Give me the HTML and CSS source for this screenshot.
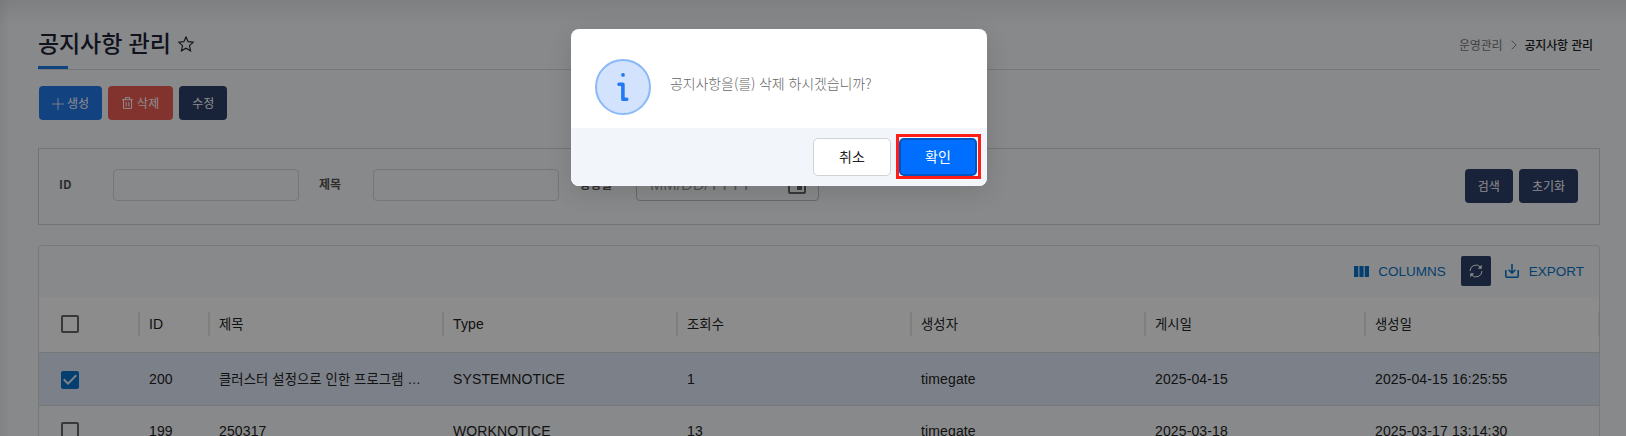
FILE: index.html
```html
<!DOCTYPE html>
<html lang="ko">
<head>
<meta charset="utf-8">
<title>공지사항 관리</title>
<link rel="stylesheet" href="styles.css">
</head>
<body>
<svg class="defs" width="0" height="0">
  <symbol id="box" viewBox="0 0 24 24"><path d="M19 5v14H5V5h14m0-2H5c-1.1 0-2 .9-2 2v14c0 1.1.9 2 2 2h14c1.1 0 2-.9 2-2V5c0-1.1-.9-2-2-2z"/></symbol>
  <symbol id="box-checked" viewBox="0 0 24 24"><path d="M19 3H5c-1.11 0-2 .9-2 2v14c0 1.1.89 2 2 2h14c1.11 0 2-.9 2-2V5c0-1.1-.89-2-2-2zm-9 14l-5-5 1.41-1.41L10 14.17l7.59-7.59L19 8l-9 9z"/></symbol>
</svg>
<main class="page">
  <header class="title-bar">
    <h1 class="title">공지사항 관리</h1>
    <svg class="star" viewBox="0 0 16 16"><path d="M8 .9l2.15 4.75 5.15.55-3.85 3.5 1.1 5.1L8 12.2l-4.55 2.6 1.1-5.1L.7 6.2l5.15-.55z"/></svg>
    <nav class="crumbs">
      <span>운영관리</span>
      <svg class="chevron" viewBox="0 0 6 10"><path d="M.7.7L5.2 5 .7 9.3"/></svg>
      <strong>공지사항 관리</strong>
    </nav>
  </header>

  <div class="actions">
    <button class="btn blue"><svg class="plus" viewBox="0 0 12 12"><path d="M6 0v12M0 6h12"/></svg>생성</button>
    <button class="btn red"><svg class="trash" viewBox="0 0 11 12"><path d="M0 2.7h11M3.3 2.5V.6h4.4v1.9M1.5 2.9v8.5h8V2.9M4.2 5v4.4M6.8 5v4.4"/></svg>삭제</button>
    <button class="btn navy">수정</button>
  </div>

  <section class="search">
    <label class="label-id">ID</label><div class="field"></div>
    <label class="label-title">제목</label><div class="field"></div>
    <label class="label-date">생성일</label>
    <div class="field date"><span>MM/DD/YYYY</span>
      <svg viewBox="0 0 24 24"><path d="M17 12h-5v5h5v-5zM16 1v2H8V1H6v2H5c-1.11 0-1.99.9-1.99 2L3 19c0 1.1.89 2 2 2h14c1.1 0 2-.9 2-2V5c0-1.1-.9-2-2-2h-1V1h-2zm3 18H5V8h14v11z"/></svg>
    </div>
    <div class="search-buttons"><button class="btn navy">검색</button><button class="btn navy">초기화</button></div>
  </section>

  <section class="grid">
    <div class="toolbar">
      <span class="tool"><svg class="cols" viewBox="0 0 15 11"><path d="M0 0h4.3v11H0zM5.4 0h4.2v11H5.4zM10.7 0H15v11h-4.3z"/></svg>COLUMNS</span>
      <span class="refresh"><svg viewBox="0 0 14 14"><path class="arc" d="M1 7A6 6 0 0 1 11.6 3.2M13 7A6 6 0 0 1 2.4 10.8"/><path class="tip" d="M12.7.8v4H8.8zM1.3 13.2v-4h3.9z"/></svg></span>
      <span class="tool export"><svg class="down" viewBox="0 0 14 14"><path d="M.8 6v6.2q0 1 1 1h10.4q1 0 1-1V6M7 0v9M3.6 5.8L7 9.2l3.4-3.4"/></svg>EXPORT</span>
    </div>
    <div class="row head">
      <div class="check"><svg><use href="#box"/></svg></div>
      <div>ID</div><div class="ko">제목</div><div>Type</div><div class="ko">조회수</div><div class="ko">생성자</div><div class="ko">게시일</div><div class="ko">생성일</div>
    </div>
    <div class="row selected">
      <div class="check"><svg><use href="#box-checked"/></svg></div>
      <div>200</div><div class="ko">클러스터 설정으로 인한 프로그램 …</div><div>SYSTEMNOTICE</div><div>1</div><div>timegate</div><div>2025-04-15</div><div>2025-04-15 16:25:55</div>
    </div>
    <div class="row">
      <div class="check"><svg><use href="#box"/></svg></div>
      <div>199</div><div>250317</div><div>WORKNOTICE</div><div>13</div><div>timegate</div><div>2025-03-18</div><div>2025-03-17 13:14:30</div>
    </div>
  </section>
</main>

<div class="overlay">
  <div class="dialog">
    <div class="dialog-body">
      <div class="info"><svg viewBox="0 0 12 28"><circle cx="6" cy="1.9" r="1.9"/><path d="M2 11.2h3.9v15.1h3.8"/></svg></div>
      <p>공지사항을(를) 삭제 하시겠습니까?</p>
    </div>
    <div class="dialog-foot">
      <button class="choice">취소</button>
      <button class="choice confirm">확인</button>
    </div>
  </div>
</div>
</body>
</html>
```
FILE: styles.css
```css
* { box-sizing: border-box; }
body {
  margin: 0;
  height: 436px;
  overflow: hidden;
  background: #f7f9fc;
  font-family: "Noto Sans CJK KR", sans-serif;
  font-size: 12px;
  color: #222;
}
.defs { position: absolute; }
button { font-family: inherit; }
svg { display: block; flex: none; }

.page {
  height: 436px;
  overflow: hidden;
  padding: 0 26px 0 38px;
  background:
    linear-gradient(to right, rgba(0,0,0,.05), transparent 10px),
    linear-gradient(to bottom, rgba(0,0,0,.07), transparent 24px);
}

.title-bar {
  height: 70px;
  display: flex;
  align-items: center;
  padding: 18px 7px 0 0;
  border-bottom: 1px solid #d5d7da;
  background: linear-gradient(#1a7ae8, #1a7ae8) left bottom / 30px 3px no-repeat;
}
.title { margin: 0; padding-bottom: 3px; font-size: 23px; line-height: 31px; letter-spacing: -.1px; font-weight: 500; color: #1e2238; }
.star { width: 16px; height: 16px; margin-left: 7px; fill: none; stroke: #222; stroke-width: 1.1; }
.crumbs { margin-left: auto; display: flex; align-items: center; color: #777; padding-top: 3px; line-height: 18px; letter-spacing: -.15px; }
.crumbs strong { color: #222; font-weight: 500; }
.chevron { width: 6px; height: 10px; margin: 0 7px 0 9px; fill: none; stroke: #888; }

.actions { display: flex; gap: 6px; padding: 16px 0 0 1px; }
.btn {
  height: 34px;
  display: flex;
  align-items: center;
  border: 0;
  border-radius: 4px;
  padding: 0 13px 1px;
  font-size: 12px;
  color: #fff;
}
.blue { background: #2378ec; }
.red { background: #ee5d54; padding: 0 14px 1px; }
.navy { background: #2c3e69; }
.plus { width: 12px; height: 12px; margin: 2px 3px 0 0; stroke: #fff; stroke-width: .8; }
.trash { width: 11px; height: 12px; margin: 1px 4px 0 0; fill: none; stroke: #fff; }

.search {
  display: flex;
  height: 77px;
  margin-top: 28px;
  padding: 20px 21px 0 20px;
  border: 1px solid #d2d4d8;
}
.search label { line-height: 30px; font-weight: 700; color: #555; }
.label-id { width: 54px; }
.label-title { width: 54px; margin-left: 20px; }
.label-date { width: 57px; margin-left: 20px; }
.field { width: 186px; height: 32px; border: 1px solid #d5d7da; border-radius: 4px; }
.date {
  width: 183px;
  display: flex;
  align-items: center;
  justify-content: space-between;
  padding: 0 9px 1px 13px;
  border-color: #bdbfc1;
  font: 16px "Liberation Sans", sans-serif;
  color: #999;
}
.date svg { width: 24px; height: 24px; fill: #666; }
.search-buttons { margin-left: auto; display: flex; gap: 6px; }

.grid {
  margin-top: 20px;
  height: 260px;
  border: 1px solid #d8dadd;
  border-radius: 4px 4px 0 0;
  overflow: hidden;
  font-family: "Liberation Sans", "Noto Sans CJK KR", sans-serif;
  font-size: 14px;
}
.toolbar {
  height: 51px;
  display: flex;
  align-items: center;
  justify-content: flex-end;
  padding: 0 15px 1px 0;
  color: #0a74cc;
}
.tool { display: flex; align-items: center; font-size: 13.5px; }
.cols { width: 15px; height: 11px; margin-right: 9px; fill: #0a74cc; }
.down { width: 14px; height: 14px; margin-right: 10px; fill: none; stroke: #0a74cc; stroke-width: 1.6; }
.export { margin-left: 14px; }
.refresh {
  width: 30px;
  height: 30px;
  margin-left: 15px;
  display: grid;
  place-items: center;
  border-radius: 2px;
  background: #2c3e69;
}
.refresh svg { width: 14px; height: 14px; }
.arc { fill: none; stroke: #fff; }
.tip { fill: #fff; }
.row {
  display: grid;
  grid-template-columns: 100px 70px 234px 234px 234px 234px 220px 234px;
  align-items: center;
  height: 51px;
  border-bottom: 1px solid #d8dadd;
}
.row > div { padding-left: 10px; letter-spacing: .13px; white-space: nowrap; line-height: 24px; }
.row > .ko { font-size: 13.3px; padding-top: 1px; }
.row > .check { padding-left: 19px; }
.check svg { width: 24px; height: 24px; fill: #666; }
.head { height: 56px; padding-bottom: 2px; background: #fff; }
.head > div + div {
  background: linear-gradient(#e8e8e8, #e8e8e8) left / 1px 100% no-repeat;
}
.head > div { height: 24px; border-right: 1px solid #e8e8e8; }
.head > .ko { line-height: 23px; }
.selected { height: 53px; background: #e2ebf9; }
.selected .check svg { fill: #0a74cc; margin-top: 1px; }

.overlay { position: absolute; inset: 0; background: rgba(0,0,0,.45); }
.dialog {
  position: absolute;
  left: 571px;
  top: 29px;
  width: 416px;
  height: 157px;
  border-radius: 8px;
  overflow: hidden;
  background: #fff;
  box-shadow: 0 6px 24px rgba(0,0,0,.12);
}
.dialog-body { height: 99px; display: flex; padding: 30px 24px 0; }
.info {
  width: 56px;
  height: 56px;
  display: grid;
  place-items: center;
  border: 2px solid #8ab9f8;
  border-radius: 50%;
  background: #d3e3fd;
}
.info svg { width: 12px; height: 28px; fill: #2378f5; }
.info path { fill: none; stroke: #2378f5; stroke-width: 3.6; stroke-linecap: round; stroke-linejoin: round; }
.dialog p { margin: 12px 0 0 19px; font-size: 14px; line-height: 24px; font-weight: 300; letter-spacing: -.1px; color: #666; }
.dialog-foot { height: 58px; display: flex; justify-content: flex-end; gap: 8px; padding: 10px; background: #f2f6fb; }
.choice {
  width: 78px;
  height: 38px;
  border: 1px solid #d0d3d6;
  border-radius: 5px;
  background: #fff;
  font-size: 14px;
  color: #222;
  padding: 0 0 2px;
}
.confirm {
  position: relative;
  border: 2px solid #0055c4;
  background: #006fff;
  color: #fff;
}
/* square highlight ring around the confirm button */
.confirm::after {
  content: "";
  position: absolute;
  inset: -6px -6px -5px -5px;
  border: 3px solid #ff1d18;
}
```
